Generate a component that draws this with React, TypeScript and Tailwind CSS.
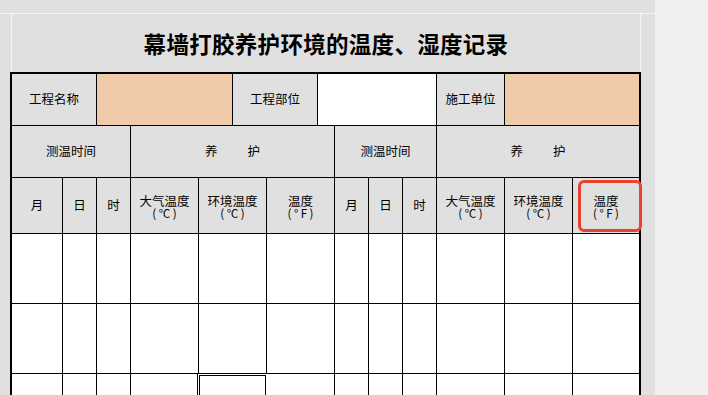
const font = "font-['Noto_Sans_CJK_SC','Noto_Sans_CJK_JP',sans-serif]";

function Cell({
  w,
  last,
  bg = "bg-[#e0e0e0]",
  children,
  className = "",
}: {
  w: string;
  last?: boolean;
  bg?: string;
  children?: React.ReactNode;
  className?: string;
}) {
  return (
    <div className={`${w} ${bg} ${last ? "" : "border-r border-black"} relative flex shrink-0 items-center justify-center ${className}`}>
      {children}
    </div>
  );
}

function TwoLine({ top, bottom }: { top: string; bottom: string }) {
  return (
    <div className="flex flex-col items-center pt-px">
      <span className="text-[12.5px] leading-[13px]">{top}</span>
      <span className="text-[11.5px] leading-[12px] tracking-[2.5px] pl-[2.5px]">{bottom}</span>
    </div>
  );
}

const dataCols = ["w-[51px]", "w-[34px]", "w-[34px]", "w-[68px]", "w-[68px]", "w-[68px]", "w-[34px]", "w-[34px]", "w-[34px]", "w-[68px]", "w-[68px]", "w-[66px]"];

function DataRow({ selected }: { selected?: number }) {
  return (
    <div className="flex h-[70px] shrink-0 border-b border-black">
      {dataCols.map((w, i) => (
        <Cell key={i} w={w} bg="bg-white" last={i === dataCols.length - 1}>
          {selected === i && (
            <div className="absolute left-[-2px] top-[-1px] h-[80px] w-[71px] border border-black shadow-[inset_0_0_0_1px_#fff,inset_0_0_0_2px_#000]" />
          )}
        </Cell>
      ))}
    </div>
  );
}

export default function App() {
  return (
    <div className={`flex h-[395px] w-[708px] overflow-hidden bg-[#f0f0f0] text-black ${font}`}>
      <div className="flex w-[655px] shrink-0 flex-col bg-[#e0e0e0]">
        <div className="h-[13px] shrink-0" />
        <div className="h-px shrink-0 bg-[#f4f4f4]" />
        <div className="ml-[11px] flex h-[58px] w-[630px] shrink-0 items-center justify-center border-x border-[#f4f4f4]">
          <h1 className="text-[22.5px] font-bold leading-none tracking-[0.3px]">幕墙打胶养护环境的温度、湿度记录</h1>
        </div>

        <div className="ml-[10px] flex w-[631px] shrink-0 flex-col border-2 border-b-0 border-black text-[12.5px]">
          <div className="flex h-[52px] shrink-0 border-b border-black">
            <Cell w="w-[85px]">工程名称</Cell>
            <Cell w="w-[136px]" bg="bg-[#f0cba9]" />
            <Cell w="w-[85px]">工程部位</Cell>
            <Cell w="w-[119px]" bg="bg-white" />
            <Cell w="w-[68px]">施工单位</Cell>
            <Cell w="w-[134px]" bg="bg-[#f0cba9]" last />
          </div>

          <div className="flex h-[52px] shrink-0 border-b border-black">
            <Cell w="w-[119px]">测温时间</Cell>
            <Cell w="w-[204px]" className="gap-[30px]">
              <span>养</span>
              <span>护</span>
            </Cell>
            <Cell w="w-[102px]">测温时间</Cell>
            <Cell w="w-[202px]" className="gap-[30px]" last>
              <span>养</span>
              <span>护</span>
            </Cell>
          </div>

          <div className="flex h-[56px] shrink-0 border-b border-black">
            <Cell w="w-[51px]">月</Cell>
            <Cell w="w-[34px]">日</Cell>
            <Cell w="w-[34px]">时</Cell>
            <Cell w="w-[68px]"><TwoLine top="大气温度" bottom="(℃)" /></Cell>
            <Cell w="w-[68px]"><TwoLine top="环境温度" bottom="(℃)" /></Cell>
            <Cell w="w-[68px]"><TwoLine top="温度" bottom="(°F)" /></Cell>
            <Cell w="w-[34px]">月</Cell>
            <Cell w="w-[34px]">日</Cell>
            <Cell w="w-[34px]">时</Cell>
            <Cell w="w-[68px]"><TwoLine top="大气温度" bottom="(℃)" /></Cell>
            <Cell w="w-[68px]"><TwoLine top="环境温度" bottom="(℃)" /></Cell>
            <Cell w="w-[66px]" last>
              <TwoLine top="温度" bottom="(°F)" />
              <div className="absolute left-[5px] top-[2px] h-[52px] w-[64px] rounded-[6px] border-[3.5px] border-[#e9432d]" />
            </Cell>
          </div>

          <DataRow />
          <DataRow />
          <DataRow selected={4} />
        </div>
      </div>
    </div>
  );
}
